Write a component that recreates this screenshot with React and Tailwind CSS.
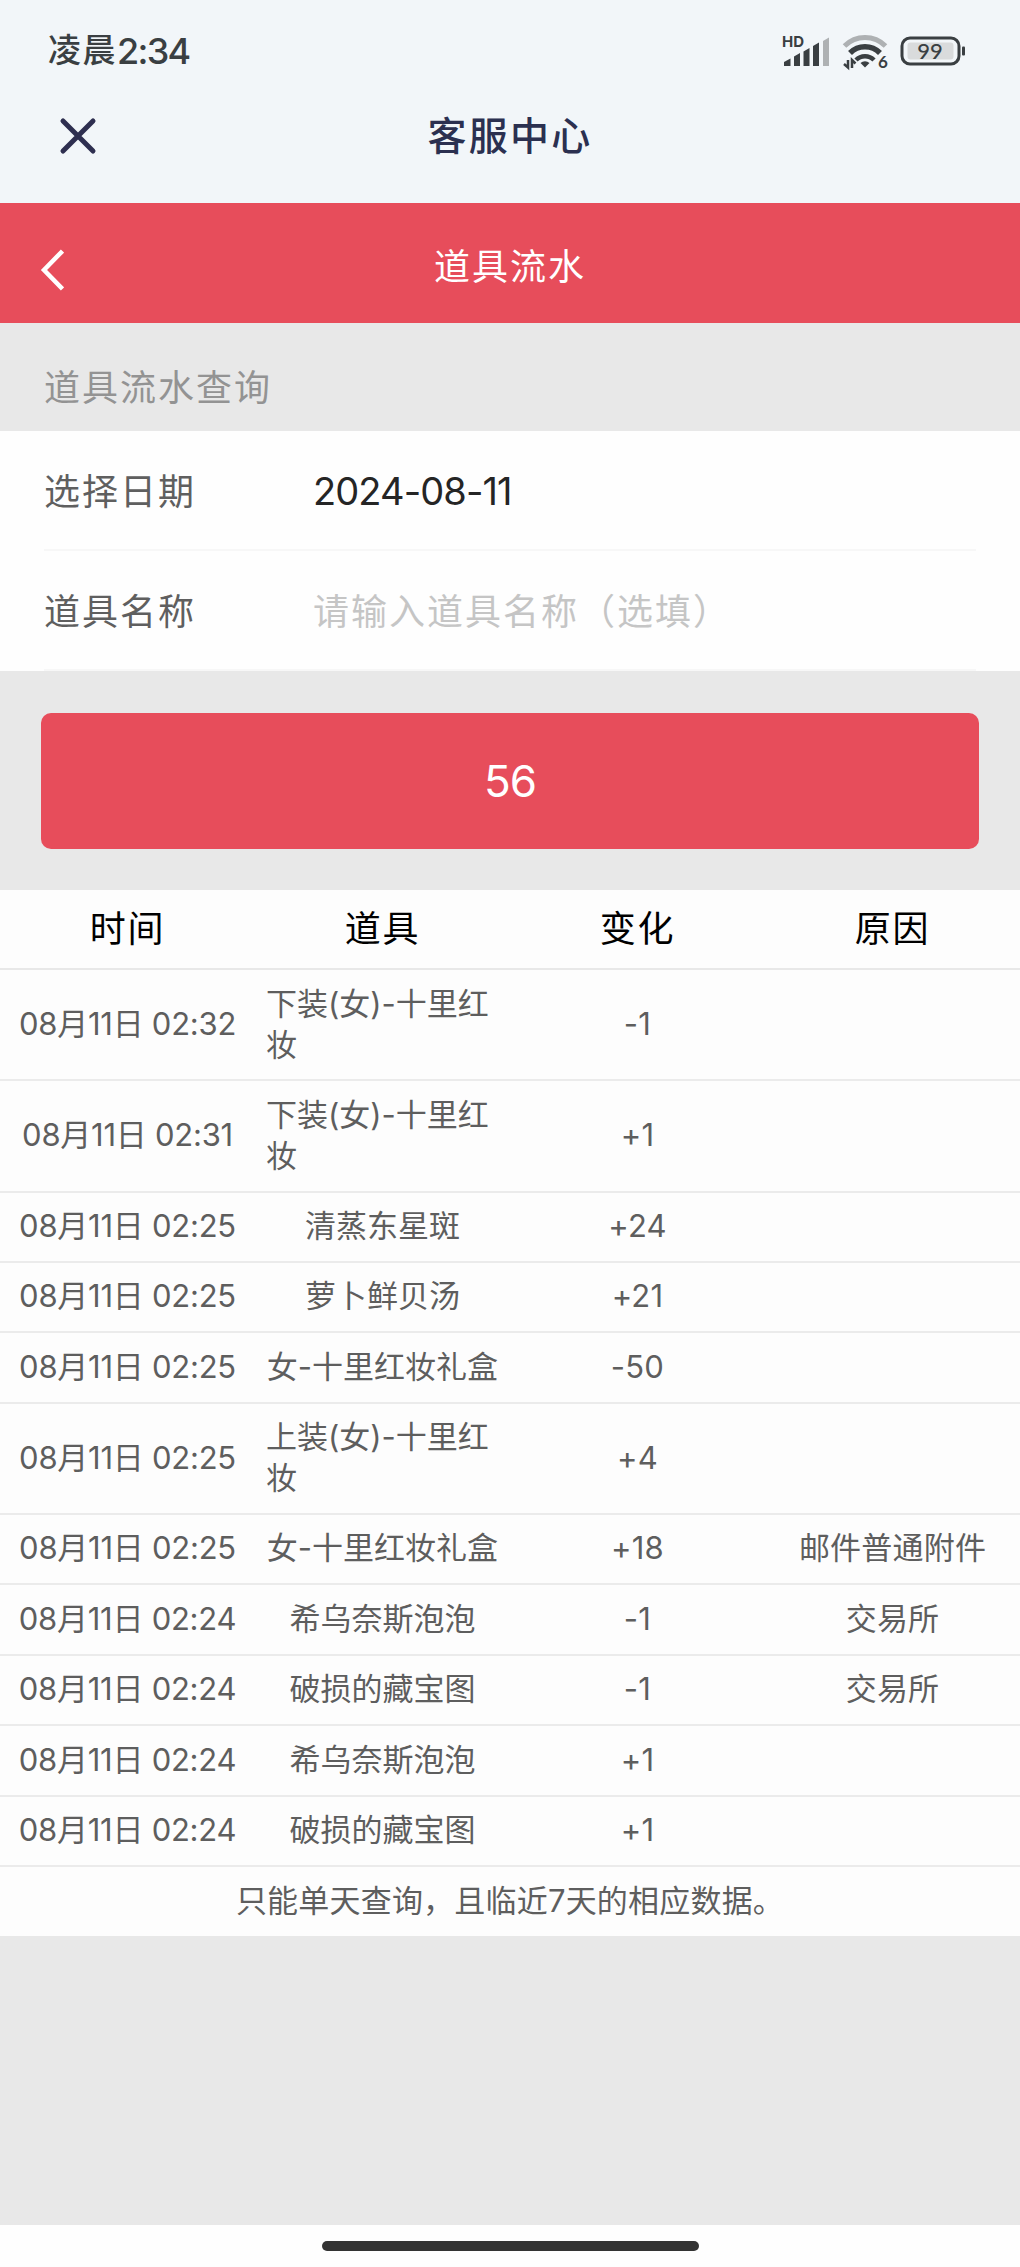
import React from 'react';

const COLUMNS = ['时间', '道具', '变化', '原因'];

const RECORDS = [
  { time: '08月11日 02:32', item: '下装(女)-十里红妆', change: '-1', reason: '', size: 'h-[111px]' },
  { time: '08月11日 02:31', item: '下装(女)-十里红妆', change: '+1', reason: '', size: 'h-[111.5px]' },
  { time: '08月11日 02:25', item: '清蒸东星斑', change: '+24', reason: '', size: 'h-[70px]' },
  { time: '08月11日 02:25', item: '萝卜鲜贝汤', change: '+21', reason: '', size: 'h-[70.5px]' },
  { time: '08月11日 02:25', item: '女-十里红妆礼盒', change: '-50', reason: '', size: 'h-[70.5px]' },
  { time: '08月11日 02:25', item: '上装(女)-十里红妆', change: '+4', reason: '', size: 'h-[111px]' },
  { time: '08月11日 02:25', item: '女-十里红妆礼盒', change: '+18', reason: '邮件普通附件', size: 'h-[70.5px]' },
  { time: '08月11日 02:24', item: '希乌奈斯泡泡', change: '-1', reason: '交易所', size: 'h-[70.5px]' },
  { time: '08月11日 02:24', item: '破损的藏宝图', change: '-1', reason: '交易所', size: 'h-[70.5px]' },
  { time: '08月11日 02:24', item: '希乌奈斯泡泡', change: '+1', reason: '', size: 'h-[70.5px]' },
  { time: '08月11日 02:24', item: '破损的藏宝图', change: '+1', reason: '', size: 'h-[70.5px]' },
];

function SignalIcon() {
  return (
    <svg width="50" height="44" viewBox="0 -4 50 44" fill="#3a3f42">
      <text x="1" y="13.5" fontSize="15" fontWeight="700" fontFamily="Inter, sans-serif" textLength="22">HD</text>
      <path d="M3 33V29l6.5-3.5V33z" />
      <path d="M13 33V23.5l6-3.5v13z" />
      <path d="M22.5 33V18.5l6-3.5v18z" />
      <path d="M32 33V13L38 9.5V33z" />
      <path d="M42 33V8L48 4.5V33z" fill="#aeb1b3" />
    </svg>
  );
}

function WifiIcon() {
  return (
    <svg width="48" height="44" viewBox="0 -4 48 44" fill="none">
      <path d="M3.5 13a29 29 0 0 1 41 0" stroke="#aeb1b3" strokeWidth="5" />
      <path d="M9 20a21 21 0 0 1 30 0" stroke="#3a3f42" strokeWidth="5.5" />
      <path d="M15 27a12.5 12.5 0 0 1 18 0" stroke="#3a3f42" strokeWidth="4.5" />
      <path d="M24 34.5l-4.5-4.5a6.5 6.5 0 0 1 9 0z" fill="#3a3f42" />
      <path d="M7 27v7.5L3 31M11 35v-8l3.5 3.5" stroke="#3a3f42" strokeWidth="2.5" />
      <text x="37" y="35" fontSize="17" fontWeight="700" fill="#3a3f42" fontFamily="Lato, sans-serif">6</text>
    </svg>
  );
}

function BatteryIcon() {
  return (
    <svg width="66" height="30" viewBox="0 0 66 30">
      <rect x="2" y="2" width="57" height="26" rx="8" fill="none" stroke="#3a3f42" strokeWidth="3" />
      <rect x="7.5" y="6.5" width="46" height="17" rx="3" fill="#d9dbdc" />
      <rect x="62" y="10.5" width="3" height="9" rx="1" fill="#3a3f42" />
      <text x="30" y="23" textAnchor="middle" fontSize="22" fontWeight="500" fill="#3a3f42" fontFamily="Lato, sans-serif">99</text>
    </svg>
  );
}

function StatusBar() {
  return (
    <div className="flex h-[102px] items-center justify-between pl-[48px] pr-[54px] text-[#3a3f42]">
      <div className="flex items-center font-medium">
        <span className="text-[33px] tracking-[1.5px]">凌晨</span>
        <span className="text-[36px] tracking-[-1.7px]">2:34</span>
      </div>
      <div className="flex items-center">
        <SignalIcon />
        <span className="ml-[10px]"><WifiIcon /></span>
        <span className="ml-[11px]"><BatteryIcon /></span>
      </div>
    </div>
  );
}

function TitleBar() {
  return (
    <div className="grid h-[101px] grid-cols-3 items-center pb-[34px] text-[#2b3050]">
      <svg className="ml-[59px]" width="38" height="38" viewBox="0 0 38 38" fill="none" stroke="#2e2f50" strokeWidth="5" strokeLinecap="round">
        <path d="M4 4l30 30M34 4L4 34" />
      </svg>
      <h1 className="pt-px text-center text-[39px] font-medium tracking-[2.3px]">客服中心</h1>
    </div>
  );
}

function PageHeader() {
  return (
    <header className="grid h-[120px] grid-cols-3 items-center bg-[#e74d5b] text-white">
      <svg className="ml-[38px] mt-[14px]" width="26" height="42" viewBox="0 0 26 42" fill="none" stroke="#fff" strokeWidth="4.5">
        <path d="M24.5 2L6 21l18.5 19" />
      </svg>
      <h2 className="pt-[7px] text-center text-[36px] tracking-[2px]">道具流水</h2>
    </header>
  );
}

function Field({ label, children }) {
  return (
    <div className="flex h-[120px] items-center border-b-2 border-[#f7f7f7] pt-[3px]">
      <span className="w-[269px] text-[36px] tracking-[2px] text-[#5f5f5f]">{label}</span>
      {children}
    </div>
  );
}

function Cell({ children }) {
  return (
    <div className="flex items-center justify-center">
      <span>{children}</span>
    </div>
  );
}

export default function App() {
  return (
    <div className="flex h-[2267px] w-[1020px] flex-col overflow-hidden bg-[#e8e8e8] font-[Inter,'Noto_Sans_CJK_SC',sans-serif]">
      <div className="bg-[#f2f6f9]">
        <StatusBar />
        <TitleBar />
      </div>
      <PageHeader />

      <div className="flex h-[108px] items-center pl-[44px] pt-[21px] text-[36px] tracking-[2px] text-[#939393]">
        道具流水查询
      </div>
      <div className="bg-[#fefefe] px-[44px]">
        <Field label="选择日期">
          <span className="text-[38px] tracking-[-0.9px] text-[#252525]">2024-08-11</span>
        </Field>
        <Field label="道具名称">
          <span className="text-[36px] tracking-[2px] text-[#c5c5c5]">请输入道具名称（选填）</span>
        </Field>
      </div>

      <button className="mx-[41px] mt-[42px] mb-[41px] h-[136px] shrink-0 rounded-[10px] bg-[#e74d5b] text-[44px] tracking-[-1px] text-white">
        56
      </button>

      {/* Records */}
      <div className="bg-[#fdfdfd] text-[31px] leading-[41px] tracking-[0.2px] text-[#5e5e5e]">
        <div className="grid h-[80px] grid-cols-4 border-b-2 border-[#e8e8e8] text-[36px] tracking-[1.7px] text-black">
          {COLUMNS.map((name) => (
            <Cell key={name}>{name}</Cell>
          ))}
        </div>
        {RECORDS.map((row, i) => (
          <div key={i} className={`grid grid-cols-4 border-b-2 border-[#ebebeb] pb-[2px] ${row.size}`}>
            <div className="flex items-center justify-center whitespace-nowrap tracking-[-0.25px]">{row.time}</div>
            <div className="flex items-center justify-center px-[11px] tracking-normal">
              <span>{row.item}</span>
            </div>
            <Cell>{row.change}</Cell>
            <Cell>{row.reason}</Cell>
          </div>
        ))}
        <div className="flex h-[69px] items-center justify-center pb-[3px]">只能单天查询，且临近7天的相应数据。</div>
      </div>

      {/* Gesture bar */}
      <div className="mt-auto flex h-[42px] justify-center bg-[#fefefe] pt-4">
        <div className="h-[10px] w-[377px] rounded-full bg-[#333]" />
      </div>
    </div>
  );
}
